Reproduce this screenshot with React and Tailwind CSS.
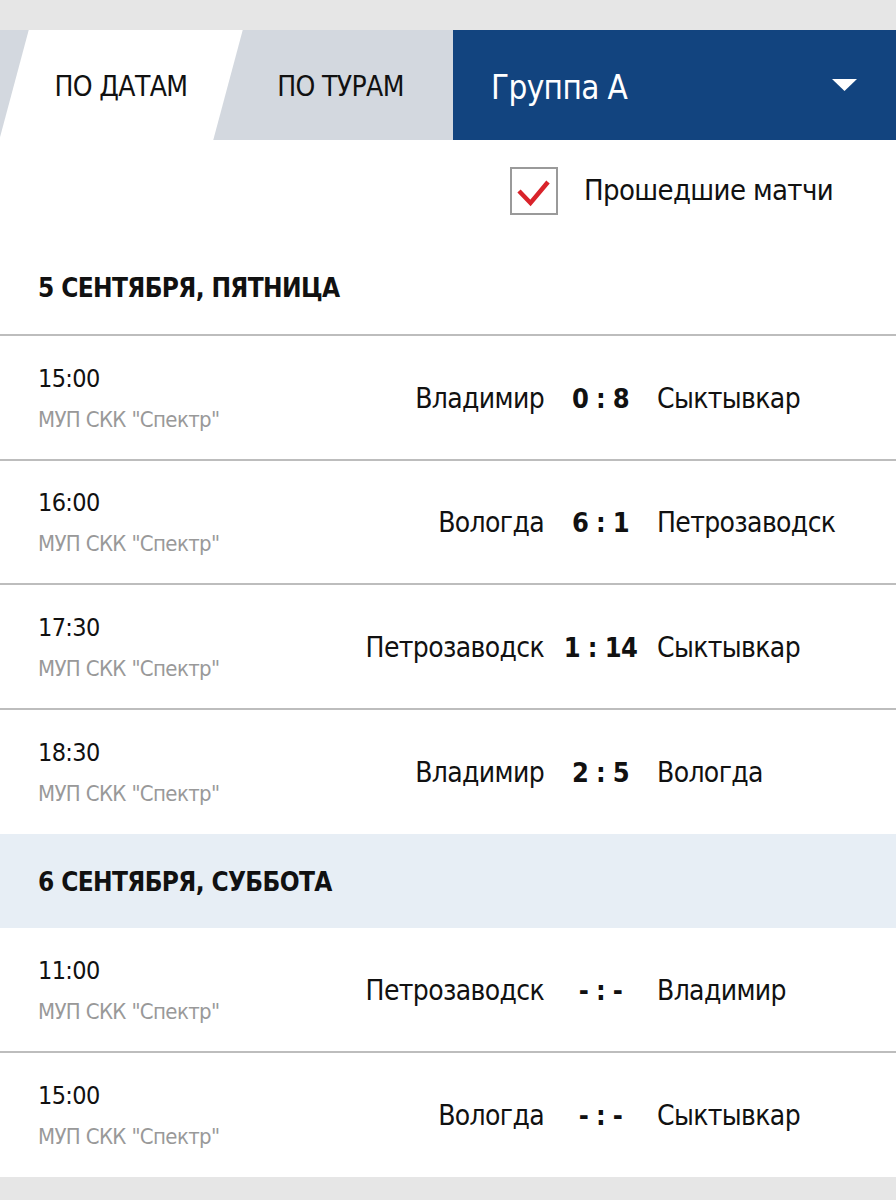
import React from 'react'

const days = [
  {
    title: '5 СЕНТЯБРЯ, ПЯТНИЦА',
    tint: false,
    matches: [
      { time: '15:00', home: 'Владимир', score: '0 : 8', away: 'Сыктывкар' },
      { time: '16:00', home: 'Вологда', score: '6 : 1', away: 'Петрозаводск' },
      { time: '17:30', home: 'Петрозаводск', score: '1 : 14', away: 'Сыктывкар' },
      { time: '18:30', home: 'Владимир', score: '2 : 5', away: 'Вологда' },
    ],
  },
  {
    title: '6 СЕНТЯБРЯ, СУББОТА',
    tint: true,
    matches: [
      { time: '11:00', home: 'Петрозаводск', score: '- : -', away: 'Владимир' },
      { time: '15:00', home: 'Вологда', score: '- : -', away: 'Сыктывкар' },
    ],
  },
]

function MatchRow({ m, last }) {
  return (
    <div className={`flex items-center h-[124.5px] pl-[38px] pt-[3px] ${last ? '' : 'border-b-2 border-[#bdbdbd]'}`}>
      <div className="w-[220px] flex flex-col whitespace-nowrap">
        <span className="text-[25px] leading-[39px] text-[#111]">{m.time}</span>
        <span className="text-[22px] leading-[39px] mt-[2px] text-[#999]">МУП СКК "Спектр"</span>
      </div>
      <div className="flex-1 text-right text-[28px] text-[#111] whitespace-nowrap">{m.home}</div>
      <div className="w-[113px] text-center text-[27px] font-bold text-[#111] whitespace-pre">{m.score}</div>
      <div className="w-[239px] text-[28px] text-[#111] whitespace-nowrap">{m.away}</div>
    </div>
  )
}

export default function App() {
  return (
    <div className="w-[896px] min-h-[1200px] bg-[#e6e6e6] pt-[30px] tracking-[-0.04em] font-['DejaVu_Sans_Condensed','DejaVu_Sans',sans-serif]">
      {/* tabs */}
      <div className="flex h-[110px] bg-[#d3d8df] overflow-hidden">
        <div className="w-[14px]" />
        <div className="w-[214px] bg-white -skew-x-[15deg] flex items-center justify-center pt-[4px]">
          <span className="skew-x-[15deg] text-[28px] text-[#111]">ПО ДАТАМ</span>
        </div>
        <div className="flex-1 flex items-center justify-center pt-[4px] text-[28px] text-[#111]">ПО ТУРАМ</div>
        <div className="w-[443px] bg-[#12447f] flex items-center justify-between pl-[38px] pr-[39px]">
          <span className="text-[33px] text-white pt-[5px]">Группа А</span>
          <svg width="25" height="12" viewBox="0 0 25 12">
            <path d="M0 0h25L12.5 12z" fill="#fff" />
          </svg>
        </div>
      </div>

      <div className="bg-white">
        {/* filter */}
        <div className="h-[100px] flex items-center justify-end pr-[63px] gap-[26px] pt-[2px]">
          <div className="w-[48px] h-[48px] border-2 border-[#9a9a9a] flex items-center justify-center">
            <svg width="44" height="44" viewBox="0 0 44 44">
              <path d="M7 22l11.5 12L36 13" fill="none" stroke="#d9232a" strokeWidth="4.5" />
            </svg>
          </div>
          <span className="text-[29px] text-[#111]">Прошедшие матчи</span>
        </div>

        {days.map((d) => (
          <div key={d.title}>
            <div className={`flex items-center pl-[38px] pt-[2px] ${d.tint ? 'h-[94px] bg-[#e7eef5]' : 'h-[96px] border-b-2 border-[#bdbdbd]'}`}>
              <span className="text-[26px] font-bold text-[#111]">{d.title}</span>
            </div>
            {d.matches.map((m, i) => (
              <MatchRow key={i} m={m} last={i === d.matches.length - 1} />
            ))}
          </div>
        ))}
      </div>
    </div>
  )
}
